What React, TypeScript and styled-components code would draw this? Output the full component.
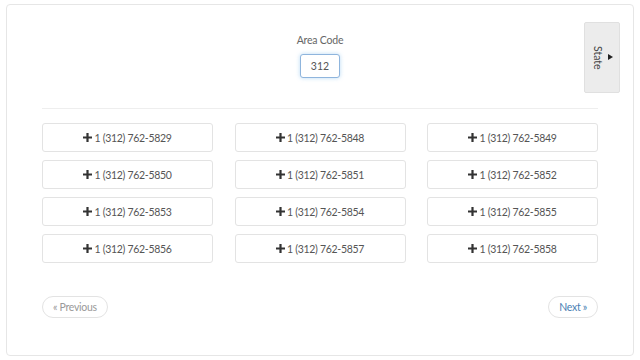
import React from "react";
import styled, { createGlobalStyle } from "styled-components";

const Global = createGlobalStyle`
  html, body { margin: 0; padding: 0; background: #fff; }
  body { font-family: Lato, "Open Sans", "Liberation Sans", sans-serif; color: #555; }
  * { box-sizing: border-box; }
`;

const Card = styled.div`
  position: relative;
  margin: 4px 0 0 6px;
  width: 628px;
  height: 352px;
  border: 1px solid #e6e6e6;
  border-radius: 4px;
  padding: 0 35px 0 35px;
  display: flex;
  flex-direction: column;
`;

const Header = styled.div`
  display: flex;
  flex-direction: column;
  align-items: center;
  padding-top: 28px;
`;

const Label = styled.label`
  font-size: 10.5px;
  letter-spacing: -0.2px;
  line-height: 14px;
  color: #666;
`;

const CodeInput = styled.input`
  margin-top: 7px;
  width: 40px;
  height: 24px;
  border: 1px solid #8fb5dd;
  border-radius: 3px;
  box-shadow: 0 0 4px rgba(102, 175, 233, 0.45);
  font-family: inherit;
  font-size: 10.5px;
  color: #555;
  text-align: center;
  outline: none;
  padding: 0;
`;

const Rule = styled.hr`
  margin: 30px 0 0 0;
  border: none;
  border-top: 1px solid #eee;
  height: 0;
`;

const Grid = styled.div`
  margin-top: 14px;
  display: grid;
  grid-template-columns: repeat(3, 171px);
  justify-content: space-between;
  row-gap: 8px;
`;

const NumberButton = styled.button`
  height: 29px;
  background: #fff;
  border: 1px solid #e3e3e3;
  border-radius: 3px;
  font-family: inherit;
  font-size: 10.5px;
  letter-spacing: -0.3px;
  color: #555;
  display: flex;
  align-items: center;
  justify-content: center;
  gap: 2px;
  padding: 0;
`;

const Pager = styled.div`
  margin-top: 33px;
  display: flex;
  justify-content: space-between;
`;

const PageLink = styled.a<{ $active?: boolean }>`
  height: 22px;
  padding: 0 10px;
  border: 1px solid #e3e3e3;
  border-radius: 12px;
  font-size: 10.5px;
  letter-spacing: -0.3px;
  line-height: 20px;
  color: ${(p) => (p.$active ? "#4a7fb3" : "#999")};
  text-decoration: none;
`;

const StateTab = styled.div`
  position: absolute;
  left: 577px;
  top: 17px;
  width: 36px;
  height: 71px;
  background: #ececec;
  border: 1px solid #e0e0e0;
  border-radius: 2px;
  display: flex;
  align-items: center;
  justify-content: center;
  gap: 4px;
`;

const TabText = styled.span`
  writing-mode: vertical-rl;
  font-size: 10.5px;
  color: #444;
`;

const Tri = styled.span`
  width: 0;
  height: 0;
  border-top: 3px solid transparent;
  border-bottom: 3px solid transparent;
  border-left: 5px solid #222;
  margin-top: -1px;
`;

const Plus = () => (
  <svg width="9" height="9" viewBox="0 0 9 9">
    <path d="M3.4 0h2.2v3.4H9v2.2H5.6V9H3.4V5.6H0V3.4h3.4z" fill="#333" />
  </svg>
);

const numbers = [
  "5829", "5848", "5849",
  "5850", "5851", "5852",
  "5853", "5854", "5855",
  "5856", "5857", "5858",
];

export default function App() {
  return (
    <>
      <Global />
      <Card>
        <Header>
          <Label>Area Code</Label>
          <CodeInput defaultValue="312" />
        </Header>
        <StateTab>
          <TabText>State</TabText>
          <Tri />
        </StateTab>
        <Rule />
        <Grid>
          {numbers.map((n) => (
            <NumberButton key={n}>
              <Plus />
              <span>1 (312) 762-{n}</span>
            </NumberButton>
          ))}
        </Grid>
        <Pager>
          <PageLink>« Previous</PageLink>
          <PageLink $active>Next »</PageLink>
        </Pager>
      </Card>
    </>
  );
}
